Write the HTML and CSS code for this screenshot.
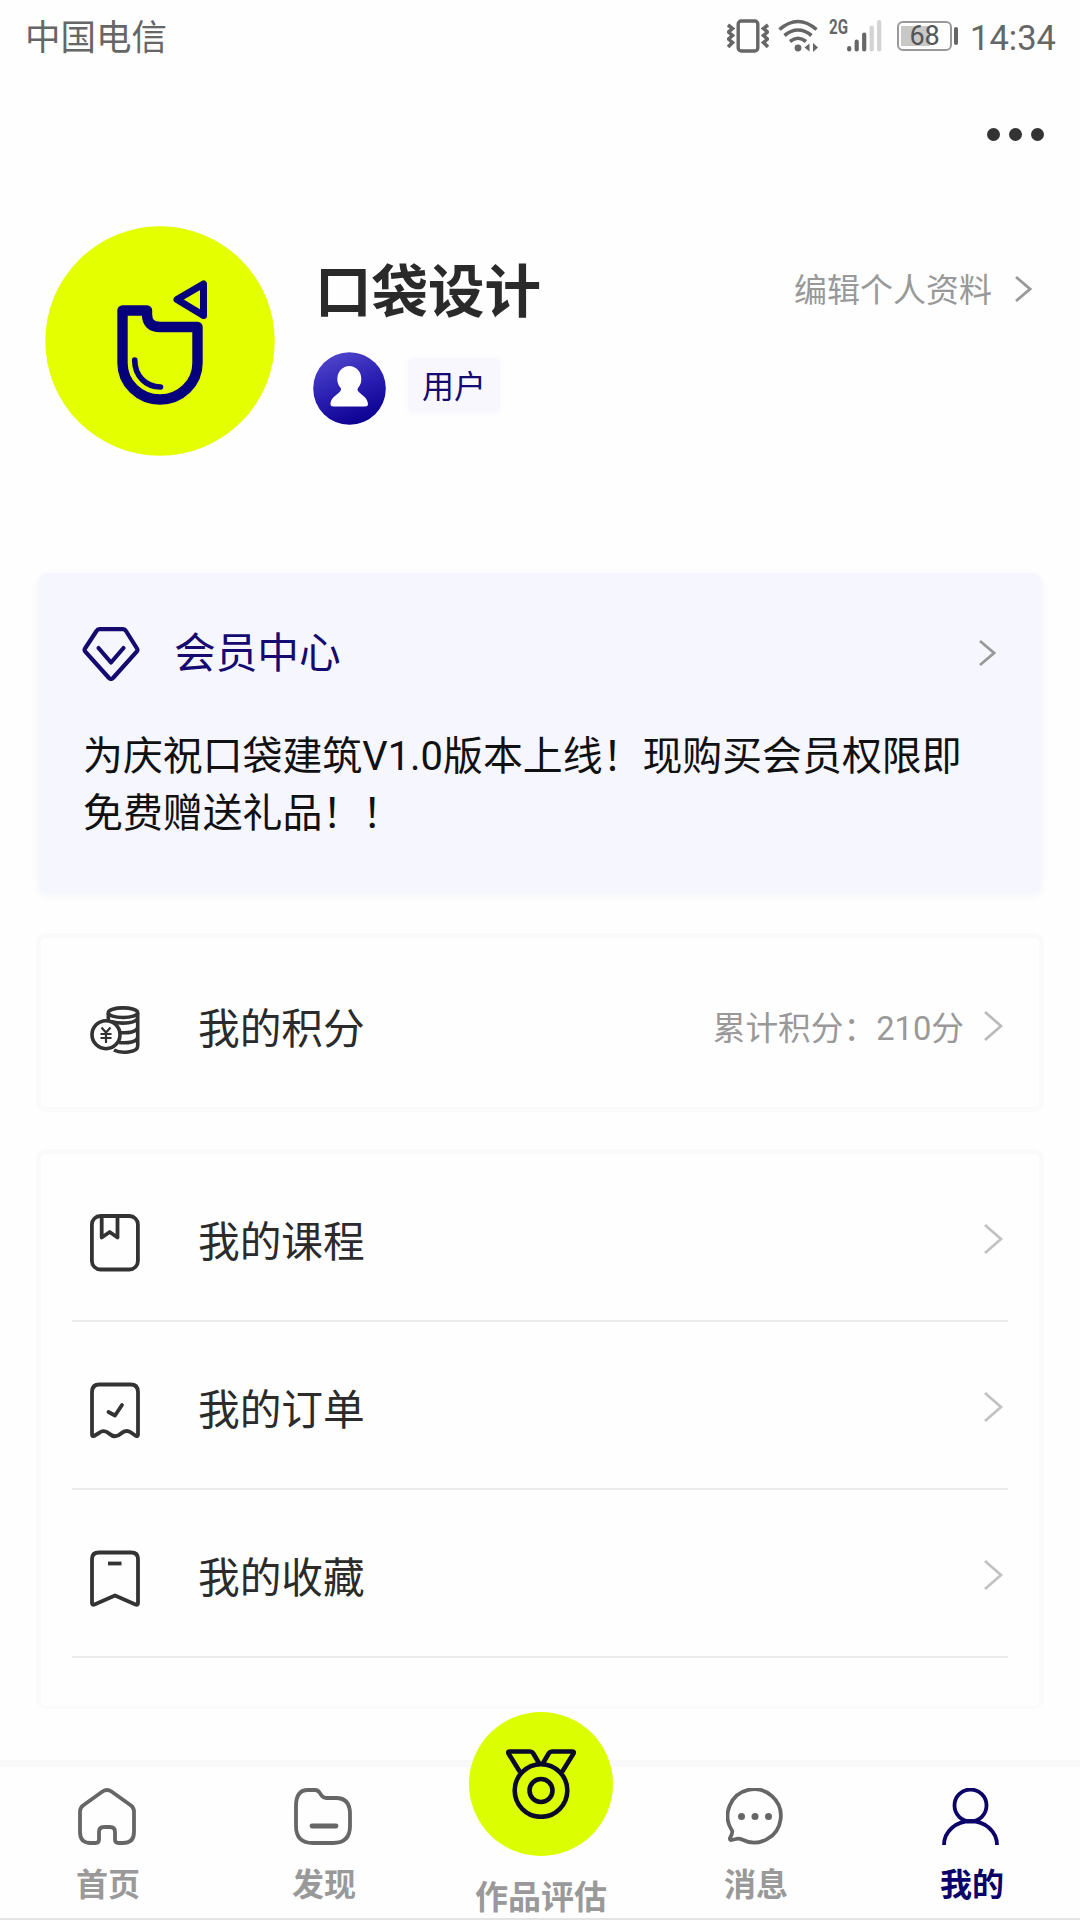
FILE: index.html
```html
<!DOCTYPE html>
<html lang="zh-CN">
<head>
<meta charset="utf-8">
<title>我的</title>
<link rel="stylesheet" href="styles.css">
</head>
<body>
<div class="screen">
  <header class="status">
    <span class="carrier">中国电信</span>
    <div class="indicators">
      <svg class="vibrate" width="42" height="34" viewBox="0 0 42 34" fill="none" stroke="#666" stroke-width="3.4">
        <rect x="11.2" y="2" width="19.6" height="30" rx="3"/>
        <path d="M1 6l4.500 3.500L1.500 13l4 3.500-4 3.500 4 3.500L1 28M41 6l-4.500 3.500L40.500 13l-4 3.500 4 3.500-4 3.500L41 28" stroke-width="3.600"/>
      </svg>
      <svg class="wifi" width="42" height="34" viewBox="0 0 42 34" fill="none" stroke="#666" stroke-width="3.6">
        <path d="M1.500 10.500Q20 -5.500 38.500 10.500M6.500 16.500Q20 5.500 33.500 16.500M12 22.500Q20 16 28 22.500"/>
        <circle cx="20" cy="29" r="3.400" fill="#666" stroke="none"/>
        <path d="M31.500 24.500v8l-5-4zM35 24v9l5-4.500z" fill="#666" stroke="none"/>
      </svg>
      <span class="net">2G</span>
      <svg class="signal" width="35" height="34" viewBox="0 0 35 34" stroke-linecap="round" stroke-width="4.200" stroke="#666">
        <path d="M2.200 29v1.500M9.700 22.500v8M17.200 15.500v15"/>
        <path d="M24.700 8.500v22M32.200 3v27.500" stroke="#d3d3d3"/>
      </svg>
      <div class="battery">68</div>
      <i class="battery-tip"></i>
      <time class="clock">14:34</time>
    </div>
  </header>

  <div class="more"><i></i><i></i><i></i></div>

  <section class="profile">
    <svg class="avatar" width="230" height="230" viewBox="0 0 230 230" fill="none" stroke="#06007c" stroke-linejoin="round" stroke-linecap="round">
      <circle cx="115" cy="115" r="114.700" fill="#e4ff00" stroke="none"/>
      <path d="M77.500 84.500H102V88Q102 101 115 101H152.500V137A37.500 36.500 0 0 1 77.500 137Z" stroke-width="10.400"/>
      <path d="M89.700 134C89.700 150 101 161 115.500 161" stroke-width="5.600"/>
      <path d="M132 73.500L158.500 58V89.500Z" stroke-width="7"/>
    </svg>
    <div class="who">
      <h1 class="name">口袋设计</h1>
      <div class="role">
        <svg width="73" height="73" viewBox="0 0 73 73">
          <defs><linearGradient id="badge" x1="0.200" y1="0" x2="0.600" y2="1"><stop offset="0" stop-color="#5148ce"/><stop offset="0.550" stop-color="#281db0"/><stop offset="1" stop-color="#0b0090"/></linearGradient></defs>
          <circle cx="36.500" cy="36.500" r="36.300" fill="url(#badge)"/>
          <ellipse cx="36.300" cy="27" rx="12" ry="13" fill="#fff"/>
          <path d="M28 36H44.500C43.500 42 54.500 43 55 52Q55 54.500 52 54.500H20.500Q17.500 54.500 17.500 52C18 43 29 42 28 36Z" fill="#fff"/>
        </svg>
        <span class="tag">用户</span>
      </div>
    </div>
    <a class="edit"><span>编辑个人资料</span>
      <svg width="18" height="28" viewBox="0 0 18 28" fill="none" stroke="#999" stroke-width="2.800"><path d="M2 2L16 14L2 26"/></svg>
    </a>
  </section>

  <section class="vip">
    <div class="vip-head">
      <svg width="58" height="54" viewBox="0 0 58 54" fill="none" stroke="#150a70" stroke-width="4.200" stroke-linejoin="round" stroke-linecap="round">
        <path d="M17.500 2.200H41Q43 2.200 44 4L55 21.500Q56 23.200 54.700 24.700L31 51Q29 52.800 27 51L3.300 24.700Q2 23.200 3 21.500L14.500 4Q15.500 2.200 17.500 2.200Z"/>
        <path d="M16.500 21L29 35.500L41.500 21"/>
      </svg>
      <h2 class="vip-title">会员中心</h2>
      <svg width="18" height="28" viewBox="0 0 18 28" fill="none" stroke="#999" stroke-width="2.800"><path d="M2 2L16 14L2 26"/></svg>
    </div>
    <p class="vip-text">为庆祝口袋建筑V1.0版本上线！现购买会员权限即免费赠送礼品！！</p>
  </section>

  <section class="card points">
    <div class="row">
      <svg class="icon" width="50" height="48" viewBox="0 0 50 48" fill="none" stroke="#333" stroke-width="3.600">
        <ellipse cx="33" cy="6.700" rx="14.700" ry="4.800"/>
        <path d="M18.300 7v9M47.700 7V40C47.700 47 30 47.500 24 44M21 15.500C32 18.500 47.700 17.500 47.700 11M29 26.500C38 27.500 47.700 26 47.700 20.500M29 36.500C38 37.500 47.700 36 47.700 30.500"/>
        <circle cx="16" cy="28.700" r="14" fill="#fff"/>
        <path d="M11.500 21.500L16 26.500L20.500 21.500M10.500 28H21.500M10.500 32H21.500M16 27V37" stroke-width="2.200"/>
      </svg>
      <span class="label">我的积分</span>
      <span class="total">累计积分：210分</span>
      <svg class="chev" width="20" height="32" viewBox="0 0 20 32" fill="none" stroke="#bbb" stroke-width="2.800"><path d="M2 2L18 16L2 30"/></svg>
    </div>
  </section>

  <section class="card menu">
    <div class="row">
      <svg class="icon" width="50" height="58" viewBox="0 0 50 58" fill="none" stroke="#333" stroke-width="3.800" stroke-linejoin="round">
        <rect x="1.900" y="2" width="46" height="53.500" rx="8.500"/>
        <path d="M11.700 3V23.500L19.700 18L27.500 23.500V3"/>
      </svg>
      <span class="label">我的课程</span>
      <svg class="chev" width="20" height="32" viewBox="0 0 20 32" fill="none" stroke="#c2c2c2" stroke-width="2.800"><path d="M2 2L18 16L2 30"/></svg>
    </div>
    <div class="row">
      <svg class="icon" width="50" height="58" viewBox="0 0 50 58" fill="none" stroke="#333" stroke-width="3.800" stroke-linejoin="round" stroke-linecap="round">
        <path d="M2 52.500V10Q2 2.500 9.500 2.500H40.500Q48 2.500 48 10V52.500Q48 54.500 46 54L41 50.500Q36 47 31 51.500Q25 57 19 51.500Q14 47 9 51L4 54Q2 54.500 2 52.500Z"/>
        <path d="M18.500 30L25 33.500L32 23"/>
      </svg>
      <span class="label">我的订单</span>
      <svg class="chev" width="20" height="32" viewBox="0 0 20 32" fill="none" stroke="#c2c2c2" stroke-width="2.800"><path d="M2 2L18 16L2 30"/></svg>
    </div>
    <div class="row">
      <svg class="icon" width="50" height="58" viewBox="0 0 50 58" fill="none" stroke="#333" stroke-width="3.800" stroke-linejoin="round">
        <path d="M2 53V9Q2 2.500 9 2.500H41Q48 2.500 48 9V53Q48 55.500 45.500 54.500L25 45.500L4.500 54.500Q2 55.500 2 53Z"/>
        <path d="M18 13.500H31.500"/>
      </svg>
      <span class="label">我的收藏</span>
      <svg class="chev" width="20" height="32" viewBox="0 0 20 32" fill="none" stroke="#c2c2c2" stroke-width="2.800"><path d="M2 2L18 16L2 30"/></svg>
    </div>
  </section>

  <nav class="tabs">
    <a class="tab">
      <svg width="58" height="58" viewBox="0 0 58 58" fill="none" stroke="#666" stroke-width="3.800" stroke-linejoin="round">
        <path d="M24.500 3.500Q29 .500 33.500 3.500L53 17.500Q56 20 56 23.500V44Q56 55 45 55H40.500Q37 55 37 51.500V44Q37 39 32 39H26Q21 39 21 44V51.500Q21 55 17.500 55H13Q2 55 2 44V23.500Q2 20 5 17.500Z"/>
      </svg>
      <span>首页</span>
    </a>
    <a class="tab">
      <svg width="58" height="58" viewBox="0 0 58 58" fill="none" stroke="#666" stroke-width="3.800" stroke-linejoin="round" stroke-linecap="round">
        <path d="M2 38V18Q2 2 14 2H21Q24 2 25.500 4.500L27.500 7.500Q29.500 10 32 10H42Q56 10 56 26V38Q56 55 39 55H19Q2 55 2 38Z"/>
        <path d="M18 38H42" stroke-width="4.800"/>
      </svg>
      <span>发现</span>
    </a>
    <a class="tab rate">
      <div class="disc">
        <svg width="70" height="70" viewBox="0 0 70 70" fill="none" stroke="#0a0a28" stroke-width="4.600" stroke-linejoin="round">
          <circle cx="35" cy="41.500" r="26.300"/><circle cx="35" cy="41.500" r="11.500"/>
          <path d="M14 23L2.500 4.500Q1.500 2.500 4 2.500H24Q26 2.500 27 4L33.500 15M56 23L67.500 4.500Q68.500 2.500 66 2.500H46Q44 2.500 43 4L36.500 15"/>
        </svg>
      </div>
      <span>作品评估</span>
    </a>
    <a class="tab">
      <svg width="58" height="58" viewBox="0 0 58 58" fill="none" stroke="#666" stroke-width="3.800" stroke-linejoin="round">
        <path d="M6 42.500A26.600 26.600 0 1 1 16 51.500Q13 50 10 51L5.500 52Q3.500 52 4 50Q7 45 6 42.500Z"/>
        <g fill="#666" stroke="none"><circle cx="15.500" cy="28.500" r="3.500"/><circle cx="29" cy="28.500" r="3.500"/><circle cx="42.500" cy="28.500" r="3.500"/></g>
      </svg>
      <span>消息</span>
    </a>
    <a class="tab active">
      <svg width="58" height="58" viewBox="0 0 58 58" fill="none" stroke="#0c0468" stroke-width="3.800">
        <circle cx="28.500" cy="17.500" r="16"/><path d="M2 57A26.500 24 0 0 1 55 57"/>
      </svg>
      <span>我的</span>
    </a>
  </nav>
</div>
</body>
</html>
```
FILE: styles.css
```css
* { box-sizing: border-box; }
body { margin: 0; background: #fefefe; font-family: Roboto, "Noto Sans CJK SC", sans-serif; color: #2b2b2b; }
svg { display: block; flex: none; }
h1, h2, p { margin: 0; font-weight: 400; }

.screen { width: 1080px; height: 1920px; display: flex; flex-direction: column; overflow: hidden; }

.status { height: 76px; padding: 0 24px 0 25px; display: flex; align-items: center; justify-content: space-between; color: #666; }
.carrier { font-size: 35.5px; line-height: 76px; }
.indicators { display: flex; align-items: center; height: 76px; padding-bottom: 4px; }
.wifi { margin-left: 9px; }
.net { width: 19px; margin-left: 9px; align-self: flex-start; margin-top: 16px; font-size: 21px; line-height: 22px; font-weight: 700; transform: scaleX(0.72); transform-origin: left center; }
.signal { margin-left: -1px; }
.battery { width: 55px; height: 30px; margin-left: 15px; border: 2px solid #999; border-radius: 6px; font-size: 27px; line-height: 27px; text-align: center; color: #555; background: linear-gradient(#c8c8c8, #c8c8c8) 2px 3px / 29px 20px no-repeat; }
.battery-tip { width: 4px; height: 18px; margin-left: 2px; border-radius: 2px; background: #666; }
.clock { font-size: 34.5px; line-height: 40px; margin: 4px 0 0 12px; }

.more { display: flex; justify-content: flex-end; gap: 9px; padding: 52px 36px 0 0; }
.more i { width: 13px; height: 13px; border-radius: 50%; background: #333; }

.profile { display: flex; margin-top: 85px; padding: 0 48px 0 45px; height: 347px; align-items: flex-start; }
.who { margin-left: 38px; padding-top: 30px; }
.name { font-size: 56.5px; line-height: 74px; font-weight: 700; margin-left: 2px; color: #2a2a2a; }
.role { display: flex; align-items: center; margin-top: 22px; gap: 22px; }
.tag { width: 92px; height: 54px; margin-top: -7px; padding-top: 2px; border-radius: 6px; background: #f8f7fe; box-shadow: 0 1px 8px #f9f8fe; font-size: 32px; line-height: 54px; text-align: center; color: #150a70; }
.edit { margin-left: auto; display: flex; align-items: center; gap: 22px; height: 54px; margin-top: 36px; font-size: 33px; line-height: 54px; color: #999; }
.edit span { margin-top: 4px; }

.vip { margin: 0 39px; height: 320px; padding: 54px 43px 0 43px; border-radius: 8px; background: #f6f6ff; box-shadow: 0 2px 10px #f3f3fb; }
.vip-head { display: flex; align-items: center; height: 54px; }
.vip-title { flex: 1; margin-left: 34px; font-size: 41.7px; line-height: 54px; color: #150a70; }
.vip-head svg:last-child { margin: 0 2px 2px 0; }
.vip-text { margin: 47px 0 0 1px; width: 886px; font-size: 39.9px; line-height: 57px; color: #111; }

.card { margin: 0 36px; border: 5px solid #fafafa; border-radius: 10px; padding: 0 31px; }
.row { display: flex; align-items: center; }
.row .icon { margin-top: 8px; }
.label { flex: 1; margin: 8px 0 0 58px; font-size: 41.7px; line-height: 60px; }
.total { font-size: 32.7px; line-height: 48px; color: #999; margin: 6px 19px 0 0; }
.chev { margin-right: 2px; }
.points { margin-top: 40px; height: 179px; }
.points .row { height: 157px; padding: 0 3px 1px 18px; margin-top: 10px; }
.menu { margin-top: 37px; height: 560px; border-bottom-width: 3px; }
.menu .row { height: 168px; padding: 4px 3px 0 18px; border-bottom: 2px solid #ebebeb; }

.tabs { margin-top: auto; height: 160px; display: flex; border-top: 7px solid #f9f9f9; border-bottom: 2px solid #e4e4e4; }
.tab { width: 216px; display: flex; flex-direction: column; align-items: center; padding-top: 21px; font-size: 32px; line-height: 46px; font-weight: 700; color: #999; }
.tab > svg { margin-left: -3px; }
.tab span { margin-top: 16px; }
.rate { padding: 0 0 0 2px; font-size: 33px; }
.disc { width: 144px; height: 144px; margin-top: -55px; flex: none; border-radius: 50%; background: #dbff00; display: flex; justify-content: center; align-items: center; }
.rate span { margin-top: 19px; }
.active { color: #0a0068; }
```
